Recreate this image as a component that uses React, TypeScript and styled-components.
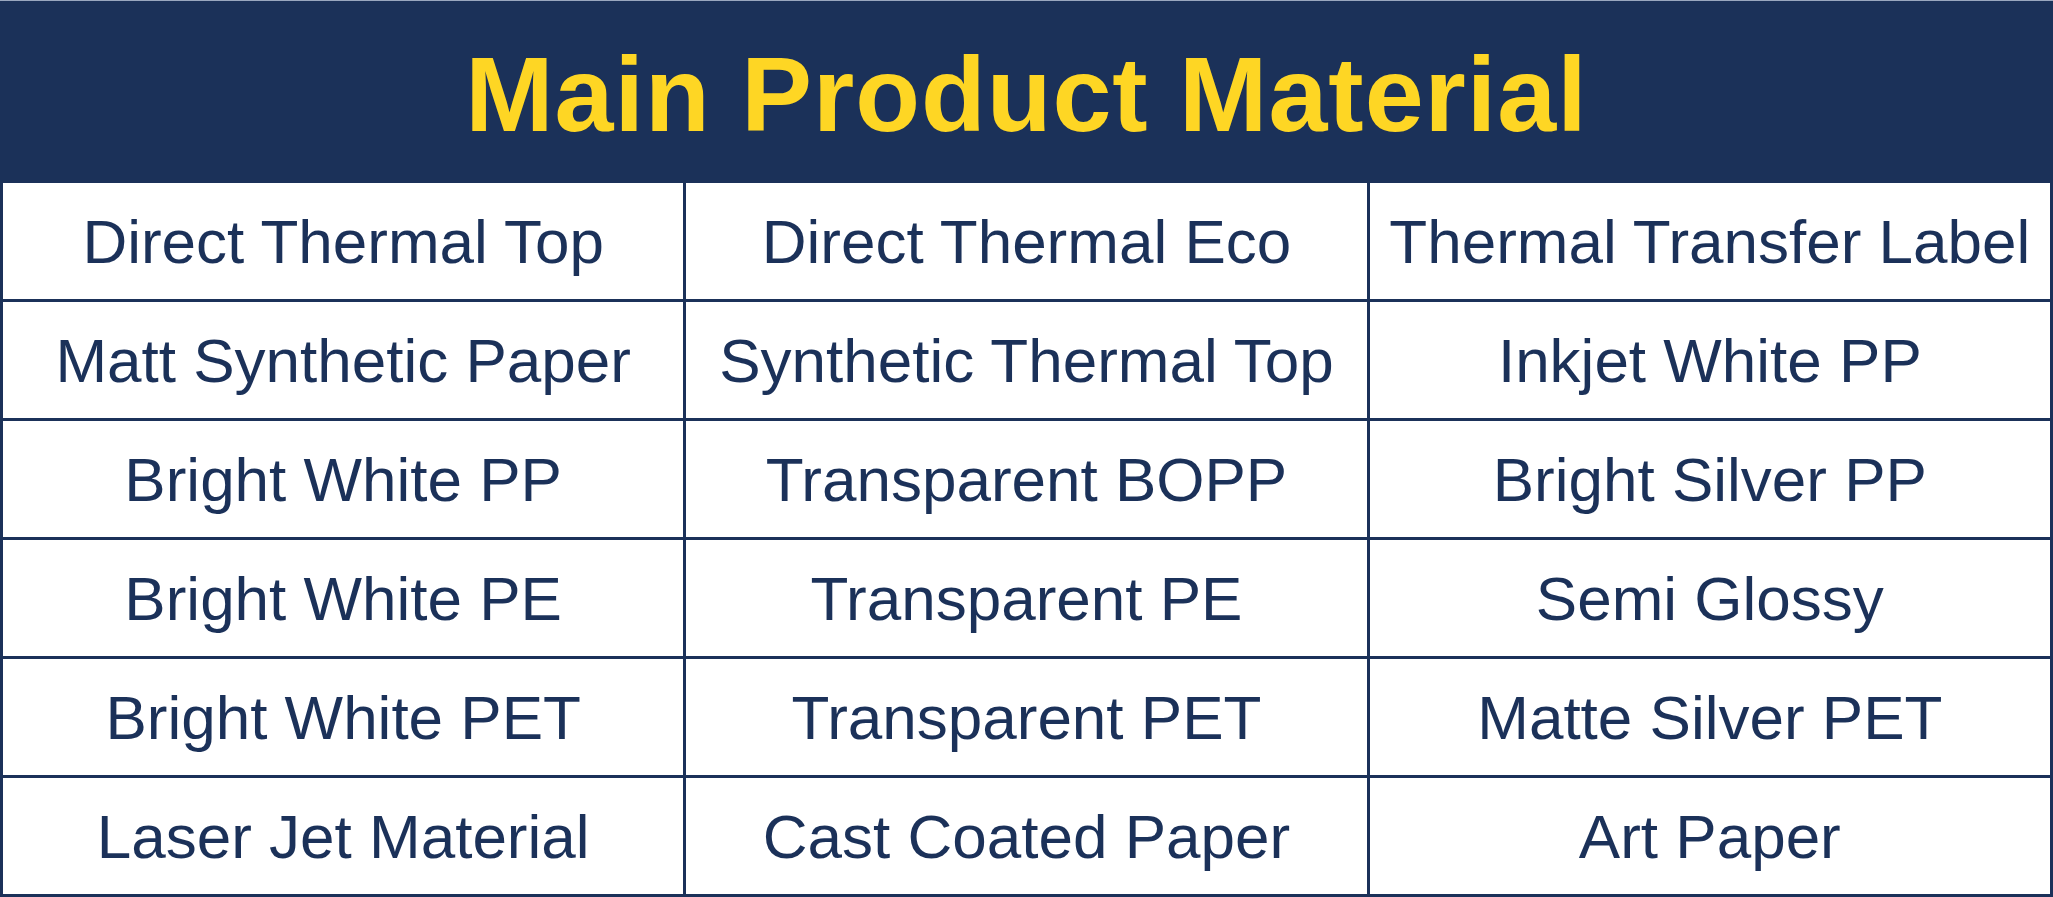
import React from 'react';
import styled, { createGlobalStyle } from 'styled-components';

const NAVY = '#1b3159';
const YELLOW = '#fed624';

const GlobalStyle = createGlobalStyle`
  html, body {
    margin: 0;
    padding: 0;
    background: #ffffff;
  }
  body {
    font-family: 'Liberation Sans', Arial, sans-serif;
  }
`;

/** 整体表格 */
const StyledTable = styled.div`
  width: 2053px;
  height: 897px;
  display: flex;
  flex-direction: column;
  background: ${NAVY};
  box-sizing: border-box;
`;

/** 标题栏 */
const StyledHeader = styled.div`
  height: 183px;
  flex: none;
  display: flex;
  align-items: center;
  justify-content: center;
  border-top: 1px solid #9aa7bf;
  box-sizing: border-box;
`;

const StyledTitle = styled.h1`
  margin: 0;
  padding-top: 4px;
  font-family: 'Liberation Sans', Arial, sans-serif;
  font-weight: 700;
  font-size: 106px;
  letter-spacing: 1px;
  line-height: 1;
  color: ${YELLOW};
`;

/** 材料网格 */
const StyledGrid = styled.div`
  flex: 1;
  display: grid;
  grid-template-columns: repeat(3, 1fr);
  grid-auto-rows: 1fr;
  gap: 3px;
  padding: 0 3px 3px 3px;
`;

const StyledCell = styled.div`
  background: #ffffff;
  display: flex;
  align-items: center;
  justify-content: center;
  font-family: 'Liberation Sans', Arial, sans-serif;
  font-size: 62px;
  color: ${NAVY};
  white-space: nowrap;
`;

const materials = [
  'Direct Thermal Top',
  'Direct Thermal Eco',
  'Thermal Transfer Label',
  'Matt Synthetic Paper',
  'Synthetic Thermal Top',
  'Inkjet White PP',
  'Bright White PP',
  'Transparent BOPP',
  'Bright Silver PP',
  'Bright White PE',
  'Transparent PE',
  'Semi Glossy',
  'Bright White PET',
  'Transparent PET',
  'Matte Silver PET',
  'Laser Jet Material',
  'Cast Coated Paper',
  'Art Paper',
];

const App = () => (
  <>
    <GlobalStyle />
    <StyledTable>
      <StyledHeader>
        <StyledTitle>Main Product Material</StyledTitle>
      </StyledHeader>
      <StyledGrid>
        {materials.map((name) => (
          <StyledCell key={name}>{name}</StyledCell>
        ))}
      </StyledGrid>
    </StyledTable>
  </>
);

export default App;
